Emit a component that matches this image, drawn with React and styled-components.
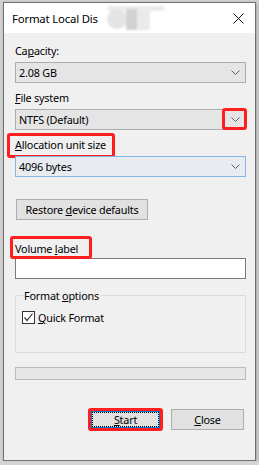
import React from 'react'
import styled, { createGlobalStyle } from 'styled-components'

const GlobalStyle = createGlobalStyle`
  html, body {
    margin: 0;
    padding: 0;
    background: #d4d4d4;
  }
  body {
    font-family: "Noto Sans", "Open Sans", sans-serif;
    font-size: 10.8px;
    letter-spacing: -0.2px;
    color: #000;
  }
`

const Window = styled.div`
  box-sizing: border-box;
  width: 253px;
  height: 459px;
  margin: 2px 0 0 3px;
  border: 1px solid #707070;
  background: #f0f0f0;
  box-shadow: 1px 1px 4px rgba(0, 0, 0, 0.25);
  display: flex;
  flex-direction: column;
`

const TitleBar = styled.div`
  position: relative;
  height: 30px;
  background: #fff;
  display: flex;
  align-items: center;
  justify-content: space-between;
  padding: 0 11px 0 8px;
  font-size: 11.4px;
`

const Smudge = styled.svg`
  position: absolute;
  left: 98px;
  top: 0;
`

const Body = styled.div`
  padding: 10px 9px 0 11px;
  display: flex;
  flex-direction: column;
`

const Label = styled.div`
  height: 15px;
  line-height: 15px;
  margin-top: ${p => p.$top || 0}px;
  display: flex;
  white-space: nowrap;
`

const Highlight = styled.span`
  position: relative;
  &::after {
    content: '';
    position: absolute;
    left: ${p => p.$l}px;
    right: ${p => p.$r}px;
    top: ${p => p.$t}px;
    bottom: ${p => p.$b}px;
    border: 3px solid #ff1e1e;
    border-radius: 3px;
    pointer-events: none;
  }
`

const Combo = styled.div`
  position: relative;
  box-sizing: border-box;
  height: 21px;
  margin-top: 4px;
  padding-left: 3px;
  display: flex;
  align-items: center;
  justify-content: space-between;
  background: ${p => (p.$hot ? '#e8ecf1' : '#e5e5e5')};
  border: 1px solid ${p => (p.$hot ? '#86b6e6' : '#adadad')};
`

const Chevron = styled.svg`
  margin-right: 5px;
`

const ArrowMark = styled.span`
  position: absolute;
  right: -2px;
  top: -2px;
  width: 25px;
  height: 22px;
  box-sizing: border-box;
  border: 3px solid #ff1e1e;
  border-radius: 3px;
`

const Button = styled.button`
  position: relative;
  box-sizing: border-box;
  width: ${p => p.$w}px;
  height: 21px;
  padding: 0;
  font: inherit;
  letter-spacing: inherit;
  color: #000;
  background: #e1e1e1;
  border: 1px solid #adadad;
  text-align: center;
  white-space: nowrap;
`

const RestoreButton = styled(Button)`
  margin: 22px 0 0 1px;
  align-self: flex-start;
`

const StartButton = styled(Button)`
  border-color: #0078d7;
  box-shadow: inset 0 0 0 2px #0078d7;
  outline: 1px dotted #000;
  outline-offset: -4px;
  &::after {
    content: '';
    position: absolute;
    inset: -2px;
    border: 3px solid #ff1e1e;
    border-radius: 3px;
  }
`

const TextInput = styled.div`
  box-sizing: border-box;
  height: 21px;
  margin-top: 2px;
  background: #fff;
  border: 1px solid #7a7a7a;
`

const Group = styled.div`
  position: relative;
  box-sizing: border-box;
  height: 58px;
  margin-top: 16px;
  padding: 15px 6px 0;
  border: 1px solid #dcdcdc;
`

const Legend = styled.span`
  position: absolute;
  top: -8px;
  left: 7px;
  padding: 0 1px;
  line-height: 15px;
  background: #f0f0f0;
`

const CheckRow = styled.div`
  display: flex;
  align-items: center;
  gap: 3px;
  line-height: 13px;
`

const Box = styled.span`
  box-sizing: border-box;
  width: 13px;
  height: 13px;
  border: 1px solid #333;
  background: #fff;
  display: flex;
  align-items: center;
  justify-content: center;
`

const Progress = styled.div`
  box-sizing: border-box;
  height: 13px;
  margin-top: 14px;
  background: #e6e6e6;
  border: 1px solid #bcbcbc;
`

const Actions = styled.div`
  display: flex;
  justify-content: flex-end;
  gap: 9px;
  margin: 29px 2px 0 0;
`

const Caret = () => (
  <Chevron width="9" height="5" viewBox="0 0 9 5">
    <polyline points="0.5,0.5 4.5,4.5 8.5,0.5" fill="none" stroke="#606060" strokeWidth="1" />
  </Chevron>
)

export default function App() {
  return (
    <>
      <GlobalStyle />
      <Window>
        <TitleBar>
          <span>Format Local Dis</span>
          <Smudge width="70" height="32" viewBox="0 0 70 32">
            <defs>
              <filter id="blur" x="-20%" y="-20%" width="140%" height="140%">
                <feGaussianBlur stdDeviation="1" />
              </filter>
            </defs>
            <g filter="url(#blur)">
              <rect x="5" y="3" width="58" height="5" rx="2.5" fill="#ebebeb" />
              <circle cx="15" cy="16" r="10" fill="#e4e4e4" />
              <rect x="24" y="6" width="11" height="21" fill="#d2d2d2" />
              <rect x="35" y="6" width="13" height="21" fill="#eaeaea" />
            </g>
          </Smudge>
          <svg width="11" height="11" viewBox="0 0 11 11">
            <path d="M0.5 0.5 L10.5 10.5 M10.5 0.5 L0.5 10.5" stroke="#111" strokeWidth="1" />
          </svg>
        </TitleBar>
        <Body>
          <Label>Ca<u>p</u>acity:</Label>
          <Combo>
            <span>2.08 GB</span>
            <Caret />
          </Combo>

          <Label $top={7}><u>F</u>ile system</Label>
          <Combo>
            <span>NTFS (Default)</span>
            <Caret />
            <ArrowMark />
          </Combo>

          <Label $top={7}>
            <Highlight $l={-8} $r={-9} $t={-4} $b={-6}><u>A</u>llocation unit size</Highlight>
          </Label>
          <Combo $hot>
            <span>4096 bytes</span>
            <Caret />
          </Combo>

          <RestoreButton $w={132}>Restore <u>d</u>evice defaults</RestoreButton>

          <Label $top={21}>
            <Highlight $l={-5} $r={-14} $t={-5} $b={-3}>Volume <u>l</u>abel</Highlight>
          </Label>
          <TextInput />

          <Group>
            <Legend>Format <u>o</u>ptions</Legend>
            <CheckRow>
              <Box>
                <svg width="11" height="11" viewBox="0 0 11 11">
                  <polyline points="1.5,5.5 4,8.5 9.5,1.5" fill="none" stroke="#333" strokeWidth="1.2" />
                </svg>
              </Box>
              <span><u>Q</u>uick Format</span>
            </CheckRow>
          </Group>

          <Progress />

          <Actions>
            <StartButton $w={73}><u>S</u>tart</StartButton>
            <Button $w={73}><u>C</u>lose</Button>
          </Actions>
        </Body>
      </Window>
    </>
  )
}
